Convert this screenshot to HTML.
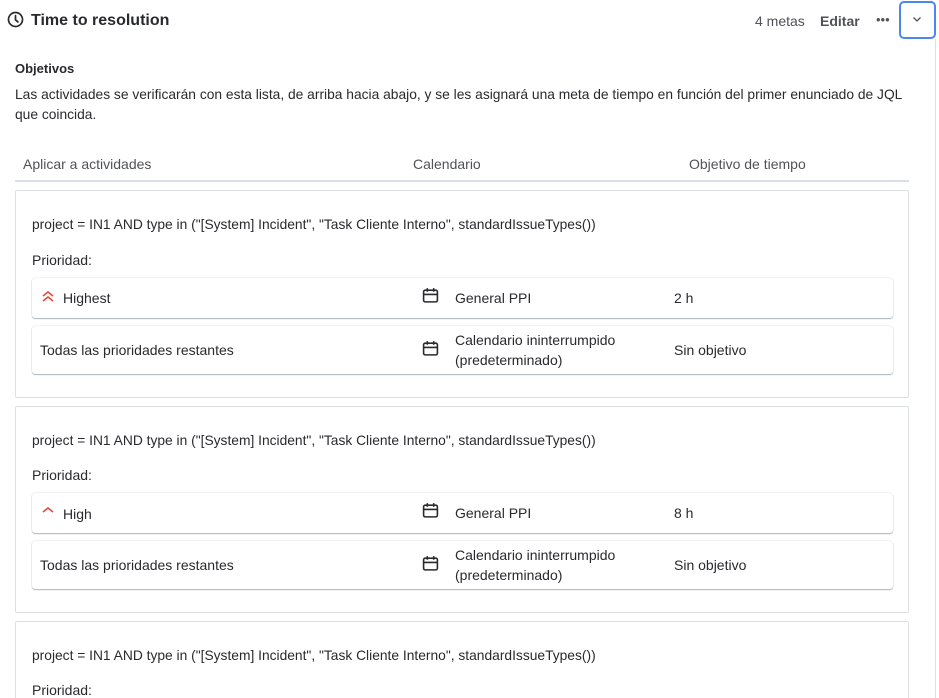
<!DOCTYPE html>
<html><head><meta charset="utf-8"><style>
*{box-sizing:border-box;margin:0;padding:0}
html,body{width:939px;height:698px;overflow:hidden}
body{background:#fff;font-family:"Liberation Sans",sans-serif;color:#292a2e;font-size:14px;position:relative}
.abs{position:absolute}
.card{position:absolute;left:15px;width:894px;border:1px solid #dcdfe4;border-radius:2px;background:#fff}
.row{position:absolute;left:16px;width:861px;border-radius:3px;box-shadow:0 1px 1px rgba(9,30,66,.3),0 0 1px rgba(9,30,66,.3);background:#fff}
.t{position:absolute;white-space:nowrap;color:#292a2e;font-size:14px}
.j{font-size:13.8px}
</style></head><body>
<svg class="abs" style="left:7px;top:11px" width="17" height="17" viewBox="0 0 16 16"><circle cx="8" cy="8" r="6.6" fill="none" stroke="#292a2e" stroke-width="1.6"/><path d="M8 4.3V8.3L10.3 10.3" fill="none" stroke="#292a2e" stroke-width="1.6" stroke-linecap="round"/></svg>
<div class="t" style="left:31px;top:12px;font-size:16px;font-weight:bold">Time to resolution</div>
<div class="t" style="left:755px;top:13px;color:#505258">4 metas</div>
<div class="t" style="left:820px;top:13px;font-weight:bold;color:#505258">Editar</div>
<div class="t" style="left:876px;top:12px;font-size:13px;letter-spacing:0px;color:#505258">•••</div>
<div class="abs" style="left:899px;top:1px;width:37px;height:38px;border:2px solid #4c87f0;border-radius:5px"></div>
<svg class="abs" style="left:912px;top:16px" width="10" height="7" viewBox="0 0 10 7"><path d="M1.5 1.5L5 5L8.5 1.5" fill="none" stroke="#505258" stroke-width="1.3"/></svg>
<div class="abs" style="left:935px;top:39px;width:1px;height:659px;background:#dcdfe4"></div>
<div class="t" style="left:15px;top:61px;font-size:13px;font-weight:bold">Objetivos</div>
<div class="abs" style="left:15px;top:85px;width:900px;line-height:20px;font-size:13.8px">Las actividades se verificarán con esta lista, de arriba hacia abajo, y se les asignará una meta de tiempo en función del primer enunciado de JQL que coincida.</div>
<div class="t" style="left:23px;top:156px;color:#505258">Aplicar a actividades</div>
<div class="t" style="left:413px;top:156px;color:#505258">Calendario</div>
<div class="t" style="left:689px;top:156px;color:#505258">Objetivo de tiempo</div>
<div class="abs" style="left:15px;top:180px;width:894px;height:2px;background:#dcdfe4"></div>

<div class="card" style="top:190px;height:208px">
<div class="t j" style="left:16px;top:26px">project = IN1 AND type in ("[System] Incident", "Task Cliente Interno", standardIssueTypes())</div>
<div class="t" style="left:16px;top:61px">Prioridad:</div>
<div class="row" style="top:87px;height:40px">
<svg class="abs" style="left:9px;top:12px" width="14" height="12" viewBox="0 0 14 12"><path d="M2 6L7 2L12 6M2 11L7 7L12 11" fill="none" stroke="#e5493a" stroke-width="1.6"/></svg>
<div class="t" style="left:31px;top:12px">Highest</div>
<svg class="abs" style="left:390px;top:9px" width="17" height="17" viewBox="0 0 16 16"><rect x="1.5" y="3" width="13" height="11" rx="1.5" fill="none" stroke="#292a2e" stroke-width="1.5"/><path d="M1.5 7H14.5M5 1V4.5M11 1V4.5" stroke="#292a2e" stroke-width="1.5"/></svg>
<div class="t" style="left:423px;top:12px">General PPI</div>
<div class="t" style="left:642px;top:12px">2 h</div>
</div>
<div class="row" style="top:135px;height:48px">
<div class="t" style="left:8px;top:16px">Todas las prioridades restantes</div>
<svg class="abs" style="left:390px;top:14px" width="17" height="17" viewBox="0 0 16 16"><rect x="1.5" y="3" width="13" height="11" rx="1.5" fill="none" stroke="#292a2e" stroke-width="1.5"/><path d="M1.5 7H14.5M5 1V4.5M11 1V4.5" stroke="#292a2e" stroke-width="1.5"/></svg>
<div class="abs" style="left:423px;top:4px;line-height:20px">Calendario ininterrumpido<br>(predeterminado)</div>
<div class="t" style="left:642px;top:16px">Sin objetivo</div>
</div>
</div>

<div class="card" style="top:406px;height:207px">
<div class="t j" style="left:16px;top:26px">project = IN1 AND type in ("[System] Incident", "Task Cliente Interno", standardIssueTypes())</div>
<div class="t" style="left:16px;top:60px">Prioridad:</div>
<div class="row" style="top:86px;height:40px">
<svg class="abs" style="left:9px;top:12px" width="14" height="10" viewBox="0 0 14 10"><path d="M2 7L7 3L12 7" fill="none" stroke="#e5493a" stroke-width="1.6"/></svg>
<div class="t" style="left:31px;top:13px">High</div>
<svg class="abs" style="left:390px;top:9px" width="17" height="17" viewBox="0 0 16 16"><rect x="1.5" y="3" width="13" height="11" rx="1.5" fill="none" stroke="#292a2e" stroke-width="1.5"/><path d="M1.5 7H14.5M5 1V4.5M11 1V4.5" stroke="#292a2e" stroke-width="1.5"/></svg>
<div class="t" style="left:423px;top:12px">General PPI</div>
<div class="t" style="left:642px;top:12px">8 h</div>
</div>
<div class="row" style="top:134px;height:48px">
<div class="t" style="left:8px;top:16px">Todas las prioridades restantes</div>
<svg class="abs" style="left:390px;top:14px" width="17" height="17" viewBox="0 0 16 16"><rect x="1.5" y="3" width="13" height="11" rx="1.5" fill="none" stroke="#292a2e" stroke-width="1.5"/><path d="M1.5 7H14.5M5 1V4.5M11 1V4.5" stroke="#292a2e" stroke-width="1.5"/></svg>
<div class="abs" style="left:423px;top:4px;line-height:20px">Calendario ininterrumpido<br>(predeterminado)</div>
<div class="t" style="left:642px;top:16px">Sin objetivo</div>
</div>
</div>

<div class="card" style="top:621px;height:120px">
<div class="t j" style="left:16px;top:26px">project = IN1 AND type in ("[System] Incident", "Task Cliente Interno", standardIssueTypes())</div>
<div class="t" style="left:16px;top:60px">Prioridad:</div>
</div>
</body></html>
